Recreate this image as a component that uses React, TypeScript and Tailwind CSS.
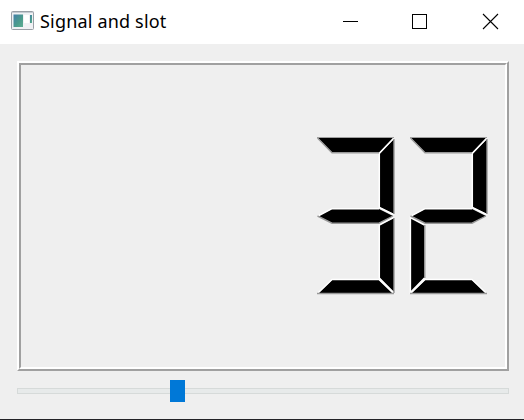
type Point = [number, number];
type Segment = { points: Point[]; light: Point[]; dark: Point[] };

const segments: Record<string, Segment> = {
  top: {
    points: [[1, 0], [76, 0], [62, 14.5], [15, 14.5]],
    light: [],
    dark: [[0.5, 0], [15, 14.8], [62, 14.8]],
  },
  upperRight: {
    points: [[77, 1], [77, 76], [62.5, 69], [62.5, 15.5]],
    light: [[76.5, 0.5], [62.3, 15.5], [62.3, 69.3], [76.5, 76.5]],
    dark: [[77, 1], [77, 76]],
  },
  middle: {
    points: [[1, 78], [15, 71], [62, 71], [76, 78], [62, 85], [15, 85]],
    light: [[1, 78], [15, 70.7], [62, 70.7]],
    dark: [[0.5, 78], [15, 85.2], [62, 85.2], [76, 78]],
  },
  lowerRight: {
    points: [[77, 80], [77, 154], [62.5, 140], [62.5, 87]],
    light: [[76.5, 79.5], [62.3, 87], [62.3, 140], [76.5, 154.5]],
    dark: [[77, 80], [77, 155]],
  },
  lowerLeft: {
    points: [[0.7, 80], [14.5, 87], [14.5, 140], [0.7, 154]],
    light: [[14.5, 87], [0.4, 79.5], [0.4, 154.5], [14.5, 140]],
    dark: [[14.8, 87], [14.8, 140]],
  },
  bottom: {
    points: [[15, 142], [62, 142], [76, 155], [1.5, 155]],
    light: [[1, 155], [15, 141.5], [62, 141.5], [76, 155]],
    dark: [[0, 155.5], [77, 155.5]],
  },
};

const digits: Record<string, string[]> = {
  "3": ["top", "upperRight", "middle", "lowerRight", "bottom"],
  "2": ["top", "upperRight", "middle", "lowerLeft", "bottom"],
};

const path = (points: Point[]) => points.map((p) => p.join(",")).join(" ");

function Digit({ value }: { value: string }) {
  const names = digits[value];
  return (
    <svg width="78" height="158" viewBox="0 -1 78 158" className="block overflow-visible" aria-label={value}>
      {names.map((n) => (
        <polygon key={n} points={path(segments[n].points)} fill="#000" />
      ))}
      {names.map((n) => (
        <polyline key={n} points={path(segments[n].light)} fill="none" stroke="#fff" strokeWidth="1.5" />
      ))}
      {names.map((n) => (
        <polyline key={n} points={path(segments[n].dark)} fill="none" stroke="#999" strokeWidth="1.4" />
      ))}
      <path d="M0 -0.5H77" stroke="#a0a0a0" strokeWidth="1" />
    </svg>
  );
}

function AppIcon() {
  return (
    <svg width="23" height="19" viewBox="0 0 23 19" className="block shrink-0">
      <defs>
        <linearGradient id="pane" x1="0" y1="0" x2="1" y2="1">
          <stop offset="0" stopColor="#437fa8" />
          <stop offset="0.6" stopColor="#4c9c8c" />
          <stop offset="1" stopColor="#5fae94" />
        </linearGradient>
      </defs>
      <rect x="0.5" y="0.5" width="22" height="18" rx="1" fill="#f0f1f4" stroke="#9a9fa6" />
      <path d="M1 1.5H22" stroke="#c5cbd2" />
      <rect x="2.5" y="3.5" width="9.5" height="12.5" fill="url(#pane)" />
      <rect x="13" y="4" width="5" height="8" fill="#fff" />
      <rect x="19" y="4" width="2" height="8" fill="url(#pane)" />
    </svg>
  );
}

function TitleBar() {
  return (
    <header className="flex h-11 items-start bg-white pl-[11px]">
      <div className="pt-[11px]"><AppIcon /></div>
      <h1 className="ml-[6px] flex-1 whitespace-nowrap pt-[8px] font-['Noto_Sans',sans-serif] text-[18px] leading-[26px] tracking-[0.18px] text-black">
        Signal and slot
      </h1>
      <svg width="181" height="44" viewBox="343 0 181 44" className="block shrink-0" fill="none" stroke="#000">
        <path d="M343 21.5H358" />
        <rect x="412.5" y="14.5" width="14" height="14" />
        <path d="M483 14L498 29M498 14L483 29" strokeWidth="1.1" />
      </svg>
    </header>
  );
}

export default function App() {
  return (
    <div className="flex h-[420px] w-[524px] flex-col border-b border-[#222226] bg-[#efefef]">
      <TitleBar />
      <main className="flex flex-col pl-[17px] pr-[15px] pt-[17px]">
        <section className="h-[310px] border-2 border-t-white border-r-[#a0a0a0] border-b-[#a0a0a0] border-l-white">
          <div className="flex h-full justify-end gap-[15px] border-2 border-t-[#a0a0a0] border-r-white border-b-white border-l-[#a0a0a0] pr-[17px] pt-[72px]">
            <Digit value="3" />
            <Digit value="2" />
          </div>
        </section>
        <div className="mt-[9px] flex h-[22px] items-center">
          <div className="h-[6px] w-[153px] border border-r-0 border-[#d6dad9] bg-[#e7eaea]" />
          <div className="h-[22px] w-[15px] bg-[#0078d7]" />
          <div className="h-[6px] flex-1 border border-l-0 border-[#d6dad9] bg-[#e7eaea]" />
        </div>
      </main>
    </div>
  );
}
